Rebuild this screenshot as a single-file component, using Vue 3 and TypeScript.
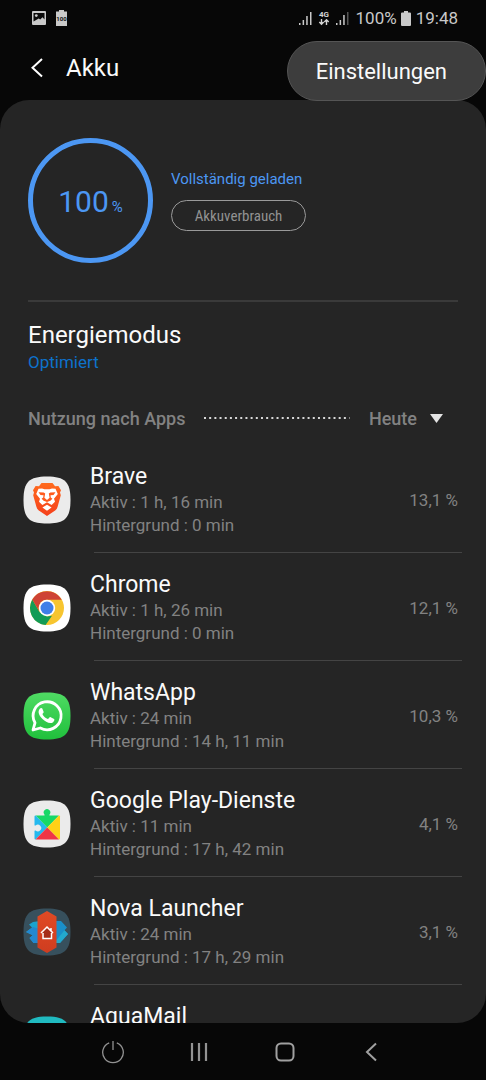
<script setup lang="ts">
import { ref } from 'vue'

interface AppUsage {
  id: string
  name: string
  active?: string
  background?: string
  share?: string
}

const level = 100
const period = ref('Heute')

const apps: AppUsage[] = [
  { id: 'brave', name: 'Brave', active: '1 h, 16 min', background: '0 min', share: '13,1 %' },
  { id: 'chrome', name: 'Chrome', active: '1 h, 26 min', background: '0 min', share: '12,1 %' },
  { id: 'whatsapp', name: 'WhatsApp', active: '24 min', background: '14 h, 11 min', share: '10,3 %' },
  { id: 'play', name: 'Google Play-Dienste', active: '11 min', background: '17 h, 42 min', share: '4,1 %' },
  { id: 'nova', name: 'Nova Launcher', active: '24 min', background: '17 h, 29 min', share: '3,1 %' },
  { id: 'aqua', name: 'AquaMail' },
]
</script>

<template>
  <div class="screen">
    <div class="status">
      <svg class="st-image" width="14" height="14" viewBox="0 0 14 14">
        <rect width="14" height="14" rx="1" fill="#c9c9c9" />
        <path d="M1.5 2h11v6.5l-2-2.3-2.3 2.4-1.5-1.2L1.5 10.5z" fill="#0a0a0a" />
        <circle cx="4.3" cy="4.6" r="1.4" fill="#c9c9c9" />
      </svg>
      <svg class="st-level" width="11" height="16" viewBox="0 0 11 16">
        <path d="M3 0h5v1.5h3V16H0V1.500h3z" fill="#c9c9c9" />
        <text x="5.500" y="10.500" text-anchor="middle">100</text>
      </svg>
      <span class="spacer"></span>
      <svg class="st-signal" width="13" height="14" viewBox="0 0 13 14" fill="#c9c9c9">
        <path d="M0 12h1.500v2H0zM3.600 9h1.500v5H3.600zM7.200 5h1.500v9H7.200zM11 1h1.500v13H11z" />
      </svg>
      <svg class="st-data" width="12" height="16" viewBox="0 0 12 16">
        <text x="6" y="7" text-anchor="middle">4G</text>
        <path d="M3.500 9v5M1.300 12l2.200 2.300L5.700 12M8.500 15v-5M6.300 12l2.200-2.300 2.200 2.300" fill="none" stroke="#d4d4d4" stroke-width="1.400" />
      </svg>
      <svg class="st-signal2" width="13" height="14" viewBox="0 0 13 14" fill="#c9c9c9">
        <path d="M0 12h1.500v2H0zM3.600 9h1.500v5H3.600zM7.200 4h1.500v10H7.200z" />
        <path d="M11 1h1.500v13H11z" fill="#555" />
      </svg>
      <span>100%</span>
      <svg class="st-battery" width="10" height="15" viewBox="0 0 10 15">
        <path d="M3 0h4v1.500h2a1 1 0 0 1 1 1V14a1 1 0 0 1-1 1H1a1 1 0 0 1-1-1V2.500a1 1 0 0 1 1-1h2z" fill="#c9c9c9" />
      </svg>
      <span>19:48</span>
    </div>

    <header class="header">
      <button class="back" type="button" aria-label="Zurück">
        <svg width="12" height="20" viewBox="0 0 12 20" fill="none" stroke="#fff" stroke-width="2">
          <path d="M11 1 1.500 9.800 11 18.500" />
        </svg>
      </button>
      <h1>Akku</h1>
    </header>

    <button class="menu" type="button">Einstellungen</button>

    <main class="panel">
      <section class="summary">
        <div class="ring"><span class="num">{{ level }}</span><span class="unit">%</span></div>
        <div class="state">
          <p>Vollständig geladen</p>
          <button class="usage" type="button">Akkuverbrauch</button>
        </div>
      </section>

      <section class="mode">
        <h2>Energiemodus</h2>
        <p>Optimiert</p>
      </section>

      <div class="filter">
        <label for="period">Nutzung nach Apps</label>
        <svg class="dots" height="2" width="100%">
          <line x1="0" y1="1" x2="100%" y2="1" stroke="#d8d8d8" stroke-width="2" stroke-dasharray="2 3.180" />
        </svg>
        <select id="period" v-model="period">
          <option>Heute</option>
          <option>Gestern</option>
        </select>
        <svg class="caret" width="13" height="9" viewBox="0 0 13 9"><path d="M0 0h13L6.500 9z" fill="#e4e4e4" /></svg>
      </div>

      <ul class="list">
        <li v-for="app in apps" :key="app.id">
          <div class="row">
            <svg class="icon" width="48" height="48" viewBox="0 0 48 48">
              <defs>
                <linearGradient id="wa" x1="0" y1="0" x2="0" y2="1">
                  <stop offset="0" stop-color="#4fdb63" />
                  <stop offset="1" stop-color="#20c03c" />
                </linearGradient>
                <linearGradient id="br" x1="0" y1="0" x2="0" y2="1">
                  <stop offset="0" stop-color="#ff6a1c" />
                  <stop offset="1" stop-color="#f5401c" />
                </linearGradient>
                <linearGradient id="nv" x1="0" y1="0" x2="0" y2="1">
                  <stop offset="0" stop-color="#e04a24" />
                  <stop offset="1" stop-color="#cf3d20" />
                </linearGradient>
              </defs>
              <path
                class="tile"
                :class="app.id"
                d="M24 .5C42 .5 47.500 6 47.500 24S42 47.500 24 47.500.5 42 .5 24 6 .5 24 .5z"
              />
              <g v-if="app.id === 'brave'">
                <path fill="url(#br)" d="M18.500 7h11l2.500 3.200 3.400-.2 2.600 4.200-1 2.300.8 2.700-3.200 11.500c-.6 2.200-1.800 3.400-3.200 4.400L24 40l-7.400-4.900c-1.400-1-2.600-2.200-3.200-4.400L10.200 19.200l.8-2.700-1-2.300 2.600-4.200 3.400.2z" />
                <path fill="#fff" d="m19 12.500-3.500.2-2.300 5.300 3.800 4.700-1 3 3.400 3.300L24 26.300l4.600 2.700 3.400-3.300-1-3 3.800-4.700-2.300-5.300-3.500-.2-2.500.8h-5zM24 28.700l-4.600 2.800 4.600 3.200 4.600-3.200z" />
                <path fill="#ff5a1c" d="m15.500 16.300 5.200.3 1.500 1-.8 4.200L24 24l2.600-2.200-.8-4.200 1.500-1 5.200-.3-2 2.700-3 .3.300 2.200 1.600 1.300-2 2L24 26l-3.400-1.200-2-2 1.600-1.300.3-2.200-3-.3z" />
              </g>
              <g v-else-if="app.id === 'chrome'">
                <circle cx="24" cy="24" r="17" fill="#f7c52f" />
                <path fill="#139b56" d="M9.300 15.500 16.700 28.200 24 32.500l5-.8L22.600 41A17 17 0 0 1 9.300 15.500z" />
                <path fill="#ce4335" d="M9.300 15.500A17 17 0 0 1 38.700 15.800H24a8.300 8.300 0 0 0-7.300 12.400z" />
                <circle cx="24" cy="24" r="8.200" fill="#fff" />
                <circle cx="24" cy="24" r="6.500" fill="#3f7fe8" />
              </g>
              <g v-else-if="app.id === 'whatsapp'">
                <path fill="none" stroke="#fff" stroke-width="2.800" stroke-linejoin="round" d="m10 38 2-7.200a14 14 0 1 1 5.300 5.200z" />
                <path fill="#fff" d="M19.300 16.500c-.5-.9-1.600-.7-2.300 0-3 3.200-.6 7.500 2.500 10.500s7.500 5.500 10.600 3.200c1.100-.8 1.700-2.600 1-3.100l-3.400-1.900c-.9-.4-1.200.2-2.200 1.400-.4.500-.9.300-2.200-.4-1.700-1-3-2.400-3.700-3.700-.4-.9 1.100-1.500 1.100-2.500z" />
              </g>
              <g v-else-if="app.id === 'play'">
                <path fill="#17d867" d="M12.500 15.500H21c.6 0 .8-.5.400-1.100a3.300 3.300 0 1 1 5.200 0c-.4.600-.2 1.100.4 1.100h9L24.200 27.500z" />
                <path fill="#25b9ee" d="M12.500 15.500 24.200 27.500 12.500 39.500q-1 0-1-1V31c0-.6.500-.8 1.100-.4a3.400 3.400 0 1 0 0-5.200c-.6.400-1.100.2-1.100-.4v-8.500q0-1 1-1z" />
                <path fill="#ffd116" d="M36 15.500q1 0 1 1v22q0 1-1 1L24.200 27.500z" />
                <path fill="#f03545" d="m24.200 27.500 11.800 12H12.500z" />
              </g>
              <g v-else-if="app.id === 'nova'">
                <path fill="#1aa3cf" d="m10 14 7-1v22h-6.500l-4-5 3.200-2.800L3 24l6-4.500-3-3z" />
                <path fill="#2388d0" d="m3 24 7-5 7 2v14h-6.500l-4-5 3.200-2.800z" />
                <path fill="#1a8fc9" d="M31 13h7l6 6.500-2.500 2.800L45 26l-8 9h-6z" />
                <path fill="#23a9cd" d="m31 35 10.500-12.700L45 26l-8 9z" />
                <path fill="url(#nv)" d="m24 3 9.500 5.500v31L24 45l-9.500-5.500v-31z" />
                <path fill="#a52d19" d="M19.500 24.500 24 20l5 5v6h-9.500z" />
                <path fill="none" stroke="#fff" stroke-width="1.500" d="m18 25 6-6 6 6M28 20v3M20 25v5.500h8.500V25" />
              </g>
            </svg>
            <div class="info">
              <h3>{{ app.name }}</h3>
              <p v-if="app.active">Aktiv : {{ app.active }}</p>
              <p v-if="app.background">Hintergrund : {{ app.background }}</p>
            </div>
            <span v-if="app.share" class="share">{{ app.share }}</span>
          </div>
        </li>
      </ul>
    </main>

    <nav class="nav">
      <button type="button" aria-label="Ein/Aus">
        <svg width="24" height="24" viewBox="0 0 24 24" fill="none" stroke="#929292" stroke-width="1.300">
          <path d="M8.200 2.800a10.300 10.300 0 1 0 7.600 0M12 1v9" />
        </svg>
      </button>
      <button type="button" aria-label="Letzte Apps">
        <svg width="24" height="24" viewBox="0 0 24 24" stroke="#929292" stroke-width="2.200">
          <path d="M5 3v18M12 3v18M19 3v18" />
        </svg>
      </button>
      <button type="button" aria-label="Startseite">
        <svg width="24" height="24" viewBox="0 0 24 24" fill="none" stroke="#a0a0a0" stroke-width="2">
          <rect x="3.500" y="3.500" width="17" height="17" rx="4.500" />
        </svg>
      </button>
      <button type="button" aria-label="Zurück">
        <svg width="24" height="24" viewBox="0 0 24 24" fill="none" stroke="#a0a0a0" stroke-width="2">
          <path d="m17 3.500-9 8.500 9 8.500" />
        </svg>
      </button>
    </nav>
  </div>
</template>

<style>
body {
  background: #070707;
}
</style>

<style scoped>
.screen {
  position: relative;
  display: flex;
  flex-direction: column;
  height: 100vh;
  background: #070707;
  color: #fafafa;
  font-family: Roboto, "Liberation Sans", sans-serif;
  overflow: hidden;
}
h1,
h2,
h3,
p,
ul {
  margin: 0;
  padding: 0;
  font-weight: 400;
}
button,
select {
  margin: 0;
  padding: 0;
  border: 0;
  background: none;
  color: inherit;
  font: inherit;
}
svg {
  display: block;
  flex: none;
}
.status {
  display: flex;
  align-items: center;
  height: 36px;
  padding: 0 28px 0 32px;
  color: #c9c9c9;
  font-size: 17px;
}
.st-image {
  margin-right: 10px;
}
.st-level text {
  font-size: 6px;
  font-weight: 700;
  fill: #111;
}
.spacer {
  flex: 1;
}
.st-data {
  margin: 0 6px;
}
.st-data text {
  font-size: 8px;
  font-weight: 700;
  fill: #d4d4d4;
}
.st-signal2 {
  margin-right: 7px;
}
.st-battery {
  margin: 0 5px 0 4px;
}
.header {
  display: flex;
  align-items: center;
  height: 64px;
  padding-left: 31px;
}
.back {
  margin-right: 23px;
}
h1 {
  font-size: 24px;
  line-height: 32px;
}
.menu {
  position: absolute;
  top: 41px;
  right: 0;
  height: 60px;
  padding: 0 38px 0 28px;
  border: 1px solid #555;
  border-radius: 30px;
  background: #3d3d3d;
  font-size: 22px;
}
.panel {
  flex: 1;
  min-height: 0;
  border-radius: 29px;
  background: #252525;
  overflow: hidden;
}
.summary {
  display: flex;
  align-items: center;
  gap: 18px;
  height: 202px;
  margin: 0 28px;
  border-bottom: 2px solid #3a3a3a;
  box-sizing: border-box;
}
.ring {
  display: flex;
  align-items: baseline;
  justify-content: center;
  gap: 3px;
  box-sizing: border-box;
  width: 125px;
  height: 125px;
  border: 5px solid #4c97f3;
  border-radius: 50%;
  color: #4c97f3;
  line-height: 117px;
}
.num {
  font-size: 30px;
}
.unit {
  font-size: 15px;
}
.state {
  margin-bottom: 2px;
}
.state p {
  margin-bottom: 9px;
  color: #4c97f3;
  font-size: 15px;
  line-height: 24px;
}
.usage {
  height: 31px;
  width: 135px;
  border: 1px solid #9a9a9a;
  border-radius: 16px;
  color: #929292;
  font-family: "Roboto Condensed", Roboto, sans-serif;
  font-size: 15px;
}
.mode {
  padding: 18px 28px 0;
}
h2 {
  font-size: 24px;
  line-height: 30px;
}
.mode p {
  color: #0d72cc;
  font-size: 17px;
  line-height: 24px;
}
.filter {
  display: flex;
  align-items: center;
  height: 28px;
  margin: 30px 43px 13px 28px;
  color: #828282;
  font-size: 18px;
  font-weight: 500;
}
.dots {
  flex: 1;
  width: auto;
  min-width: 0;
  margin: 0 19px;
}
.filter select {
  appearance: none;
  field-sizing: content;
  font-weight: 500;
}
.caret {
  margin-left: 13px;
}
.list {
  list-style: none;
}
li::after {
  content: "";
  display: block;
  height: 1px;
  margin: 0 24px 0 94px;
  background: #444;
}
.row {
  display: flex;
  align-items: center;
  padding: 17px 28px 15px 23px;
}
.icon {
  margin-right: 19px;
}
.tile {
  fill: #ebebeb;
}
.tile.chrome {
  fill: #fff;
}
.tile.whatsapp {
  fill: url(#wa);
}
.tile.nova {
  fill: #37505d;
}
.tile.aqua {
  fill: #20bac0;
}
.info {
  flex: 1;
  min-height: 75px;
}
h3 {
  font-size: 23px;
  line-height: 29px;
}
.info p {
  color: #828282;
  font-size: 17px;
  line-height: 23px;
}
.share {
  color: #828282;
  font-size: 17px;
}
.nav {
  display: flex;
  align-items: center;
  justify-content: space-between;
  height: 57px;
  padding: 0 103px 0 101px;
}
.nav button {
  display: block;
}
</style>
